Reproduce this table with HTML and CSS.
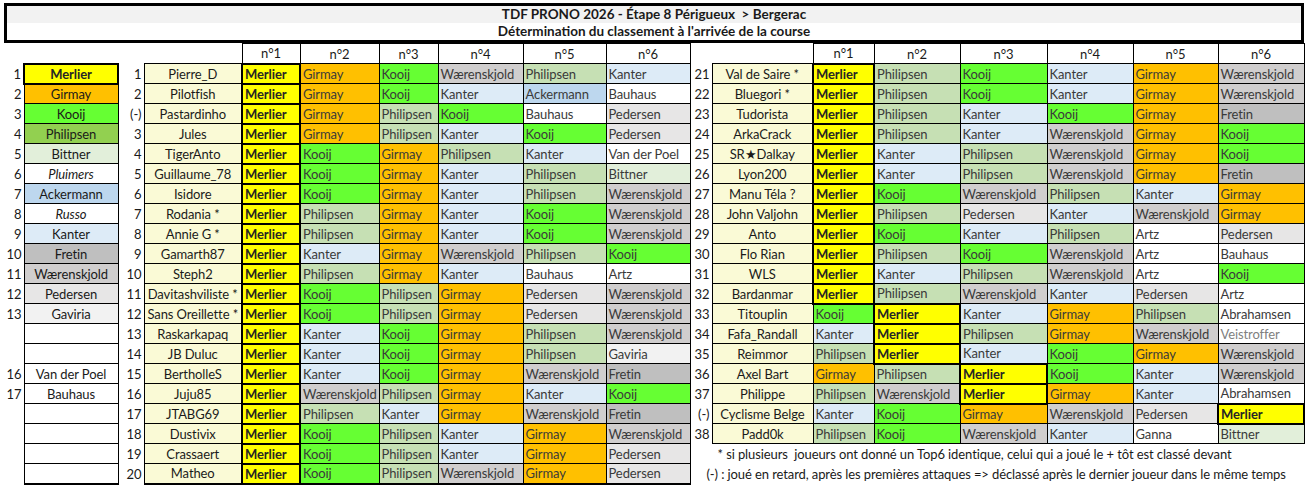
FILE: index.html
```html
<!DOCTYPE html>
<html lang="fr">
<head>
<meta charset="utf-8">
<title>TDF PRONO 2026 - Étape 8</title>
<link rel="stylesheet" href="styles.css">
</head>
<body>
<div class="sheet">
  <div class="title">
    <div class="l1">TDF PRONO 2026 - Étape 8 Périgueux &nbsp;&gt; Bergerac</div>
    <div class="l2">Détermination du classement à l'arrivée de la course</div>
  </div>
  <table class="grid">
    <colgroup>
      <col style="width:20px"><col style="width:94px"><col style="width:7px">
      <col style="width:19px"><col style="width:98px"><col style="width:58px"><col style="width:79px"><col style="width:59px"><col style="width:85px"><col style="width:83px"><col style="width:84px">
      <col style="width:22px"><col style="width:101px"><col style="width:61px"><col style="width:86px"><col style="width:87px"><col style="width:86px"><col style="width:85px"><col style="width:86px">
    </colgroup>
    <tr class="hd">
      <td class="nb" colspan="5"></td>
      <td class="h">n°1</td><td class="h">n°2</td><td class="h">n°3</td><td class="h">n°4</td><td class="h">n°5</td><td class="h">n°6</td>
      <td class="nb" colspan="2"></td>
      <td class="h">n°1</td><td class="h">n°2</td><td class="h">n°3</td><td class="h">n°4</td><td class="h">n°5</td><td class="h">n°6</td>
    </tr>
    <tr>
      <td class="rn">1</td><td class="rk me">Merlier</td><td class="nb"></td>
      <td class="rn">1</td><td class="nm">Pierre_D</td><td class="me">Merlier</td><td class="gi">Girmay</td><td class="ko">Kooij</td><td class="wa">Wærenskjold</td><td class="ph">Philipsen</td><td class="ka">Kanter</td>
      <td class="rn">21</td><td class="nm">Val de Saire *</td><td class="me">Merlier</td><td class="ph">Philipsen</td><td class="ko">Kooij</td><td class="ka">Kanter</td><td class="gi">Girmay</td><td class="wa">Wærenskjold</td>
    </tr>
    <tr>
      <td class="rn">2</td><td class="rk gi">Girmay</td><td class="nb"></td>
      <td class="rn">2</td><td class="nm">Pilotfish</td><td class="me">Merlier</td><td class="gi">Girmay</td><td class="ko">Kooij</td><td class="ka">Kanter</td><td class="ac">Ackermann</td><td class="wh">Bauhaus</td>
      <td class="rn">22</td><td class="nm">Bluegori *</td><td class="me">Merlier</td><td class="ph">Philipsen</td><td class="ko">Kooij</td><td class="ka">Kanter</td><td class="gi">Girmay</td><td class="wa">Wærenskjold</td>
    </tr>
    <tr>
      <td class="rn">3</td><td class="rk ko">Kooij</td><td class="nb"></td>
      <td class="rn">(-)</td><td class="nm">Pastardinho</td><td class="me">Merlier</td><td class="gi">Girmay</td><td class="ph">Philipsen</td><td class="ko">Kooij</td><td class="wh">Bauhaus</td><td class="pe">Pedersen</td>
      <td class="rn">23</td><td class="nm">Tudorista</td><td class="me">Merlier</td><td class="ph">Philipsen</td><td class="ka">Kanter</td><td class="ko">Kooij</td><td class="gi">Girmay</td><td class="fr">Fretin</td>
    </tr>
    <tr>
      <td class="rn">4</td><td class="rk ph2">Philipsen</td><td class="nb"></td>
      <td class="rn">3</td><td class="nm">Jules</td><td class="me">Merlier</td><td class="gi">Girmay</td><td class="ph">Philipsen</td><td class="ka">Kanter</td><td class="ko">Kooij</td><td class="pe">Pedersen</td>
      <td class="rn">24</td><td class="nm">ArkaCrack</td><td class="me">Merlier</td><td class="ph">Philipsen</td><td class="ka">Kanter</td><td class="wa">Wærenskjold</td><td class="gi">Girmay</td><td class="ko">Kooij</td>
    </tr>
    <tr>
      <td class="rn">5</td><td class="rk bi">Bittner</td><td class="nb"></td>
      <td class="rn">4</td><td class="nm">TigerAnto</td><td class="me">Merlier</td><td class="ko">Kooij</td><td class="gi">Girmay</td><td class="ph">Philipsen</td><td class="ka">Kanter</td><td class="wh">Van der Poel</td>
      <td class="rn">25</td><td class="nm">SR★Dalkay</td><td class="me">Merlier</td><td class="ka">Kanter</td><td class="ph">Philipsen</td><td class="wa">Wærenskjold</td><td class="gi">Girmay</td><td class="ko">Kooij</td>
    </tr>
    <tr>
      <td class="rn">6</td><td class="rk wh it">Pluimers</td><td class="nb"></td>
      <td class="rn">5</td><td class="nm">Guillaume_78</td><td class="me">Merlier</td><td class="ko">Kooij</td><td class="gi">Girmay</td><td class="ka">Kanter</td><td class="ph">Philipsen</td><td class="bi">Bittner</td>
      <td class="rn">26</td><td class="nm">Lyon200</td><td class="me">Merlier</td><td class="ka">Kanter</td><td class="ph">Philipsen</td><td class="wa">Wærenskjold</td><td class="gi">Girmay</td><td class="fr">Fretin</td>
    </tr>
    <tr>
      <td class="rn">7</td><td class="rk ac">Ackermann</td><td class="nb"></td>
      <td class="rn">6</td><td class="nm">Isidore</td><td class="me">Merlier</td><td class="ko">Kooij</td><td class="gi">Girmay</td><td class="ka">Kanter</td><td class="ph">Philipsen</td><td class="wa">Wærenskjold</td>
      <td class="rn">27</td><td class="nm">Manu Téla ?</td><td class="me">Merlier</td><td class="ko">Kooij</td><td class="wa">Wærenskjold</td><td class="ph">Philipsen</td><td class="ka">Kanter</td><td class="gi">Girmay</td>
    </tr>
    <tr>
      <td class="rn">8</td><td class="rk wh it">Russo</td><td class="nb"></td>
      <td class="rn">7</td><td class="nm">Rodania *</td><td class="me">Merlier</td><td class="ph">Philipsen</td><td class="gi">Girmay</td><td class="ka">Kanter</td><td class="ko">Kooij</td><td class="wa">Wærenskjold</td>
      <td class="rn">28</td><td class="nm">John Valjohn</td><td class="me">Merlier</td><td class="ph">Philipsen</td><td class="pe">Pedersen</td><td class="ka">Kanter</td><td class="wa">Wærenskjold</td><td class="gi">Girmay</td>
    </tr>
    <tr>
      <td class="rn">9</td><td class="rk ka">Kanter</td><td class="nb"></td>
      <td class="rn">8</td><td class="nm">Annie G *</td><td class="me">Merlier</td><td class="ph">Philipsen</td><td class="gi">Girmay</td><td class="ka">Kanter</td><td class="ko">Kooij</td><td class="wa">Wærenskjold</td>
      <td class="rn">29</td><td class="nm">Anto</td><td class="me">Merlier</td><td class="ko">Kooij</td><td class="ka">Kanter</td><td class="ph">Philipsen</td><td class="wh">Artz</td><td class="pe">Pedersen</td>
    </tr>
    <tr>
      <td class="rn">10</td><td class="rk fr">Fretin</td><td class="nb"></td>
      <td class="rn">9</td><td class="nm">Gamarth87</td><td class="me">Merlier</td><td class="ka">Kanter</td><td class="gi">Girmay</td><td class="wa">Wærenskjold</td><td class="ph">Philipsen</td><td class="ko">Kooij</td>
      <td class="rn">30</td><td class="nm">Flo Rian</td><td class="me">Merlier</td><td class="ph">Philipsen</td><td class="ko">Kooij</td><td class="wa">Wærenskjold</td><td class="wh">Artz</td><td class="wh">Bauhaus</td>
    </tr>
    <tr>
      <td class="rn">11</td><td class="rk wa">Wærenskjold</td><td class="nb"></td>
      <td class="rn">10</td><td class="nm">Steph2</td><td class="me">Merlier</td><td class="ph">Philipsen</td><td class="gi">Girmay</td><td class="ka">Kanter</td><td class="wh">Bauhaus</td><td class="wh">Artz</td>
      <td class="rn">31</td><td class="nm">WLS</td><td class="me">Merlier</td><td class="ka">Kanter</td><td class="ph">Philipsen</td><td class="wa">Wærenskjold</td><td class="wh">Artz</td><td class="ko">Kooij</td>
    </tr>
    <tr>
      <td class="rn">12</td><td class="rk pe">Pedersen</td><td class="nb"></td>
      <td class="rn">11</td><td class="nm">Davitashviliste *</td><td class="me">Merlier</td><td class="ko">Kooij</td><td class="ph">Philipsen</td><td class="gi">Girmay</td><td class="pe">Pedersen</td><td class="wa">Wærenskjold</td>
      <td class="rn">32</td><td class="nm">Bardanmar</td><td class="me">Merlier</td><td class="ph">Philipsen</td><td class="wa">Wærenskjold</td><td class="ka">Kanter</td><td class="pe">Pedersen</td><td class="wh">Artz</td>
    </tr>
    <tr>
      <td class="rn">13</td><td class="rk ga">Gaviria</td><td class="nb"></td>
      <td class="rn">12</td><td class="nm">Sans Oreillette *</td><td class="me">Merlier</td><td class="ko">Kooij</td><td class="ph">Philipsen</td><td class="gi">Girmay</td><td class="pe">Pedersen</td><td class="wa">Wærenskjold</td>
      <td class="rn">33</td><td class="nm">Titouplin</td><td class="ko">Kooij</td><td class="me">Merlier</td><td class="ka">Kanter</td><td class="gi">Girmay</td><td class="ph">Philipsen</td><td class="wh">Abrahamsen</td>
    </tr>
    <tr>
      <td class="rn"></td><td class="rk wh"></td><td class="nb"></td>
      <td class="rn">13</td><td class="nm">Raskarkapaq</td><td class="me">Merlier</td><td class="ka">Kanter</td><td class="ko">Kooij</td><td class="gi">Girmay</td><td class="ph">Philipsen</td><td class="wa">Wærenskjold</td>
      <td class="rn">34</td><td class="nm">Fafa_Randall</td><td class="ka">Kanter</td><td class="me">Merlier</td><td class="ph">Philipsen</td><td class="gi">Girmay</td><td class="wa">Wærenskjold</td><td class="wh ve">Veistroffer</td>
    </tr>
    <tr>
      <td class="rn"></td><td class="rk wh"></td><td class="nb"></td>
      <td class="rn">14</td><td class="nm">JB Duluc</td><td class="me">Merlier</td><td class="ka">Kanter</td><td class="ko">Kooij</td><td class="gi">Girmay</td><td class="ph">Philipsen</td><td class="ga">Gaviria</td>
      <td class="rn">35</td><td class="nm">Reimmor</td><td class="ph">Philipsen</td><td class="me">Merlier</td><td class="ka">Kanter</td><td class="ko">Kooij</td><td class="gi">Girmay</td><td class="wa">Wærenskjold</td>
    </tr>
    <tr>
      <td class="rn">16</td><td class="rk wh">Van der Poel</td><td class="nb"></td>
      <td class="rn">15</td><td class="nm">BertholleS</td><td class="me">Merlier</td><td class="ka">Kanter</td><td class="ko">Kooij</td><td class="gi">Girmay</td><td class="wa">Wærenskjold</td><td class="fr">Fretin</td>
      <td class="rn">36</td><td class="nm">Axel Bart</td><td class="gi">Girmay</td><td class="ph">Philipsen</td><td class="me">Merlier</td><td class="ko">Kooij</td><td class="ka">Kanter</td><td class="wa">Wærenskjold</td>
    </tr>
    <tr>
      <td class="rn">17</td><td class="rk wh">Bauhaus</td><td class="nb"></td>
      <td class="rn">16</td><td class="nm">Juju85</td><td class="me">Merlier</td><td class="wa">Wærenskjold</td><td class="ph">Philipsen</td><td class="gi">Girmay</td><td class="ka">Kanter</td><td class="ko">Kooij</td>
      <td class="rn">37</td><td class="nm">Philippe</td><td class="ph">Philipsen</td><td class="wa">Wærenskjold</td><td class="me">Merlier</td><td class="gi">Girmay</td><td class="ka">Kanter</td><td class="wh">Abrahamsen</td>
    </tr>
    <tr>
      <td class="rn"></td><td class="rk wh"></td><td class="nb"></td>
      <td class="rn">17</td><td class="nm">JTABG69</td><td class="me">Merlier</td><td class="ph">Philipsen</td><td class="ka">Kanter</td><td class="gi">Girmay</td><td class="wa">Wærenskjold</td><td class="fr">Fretin</td>
      <td class="rn">(-)</td><td class="nm">Cyclisme Belge</td><td class="ka">Kanter</td><td class="ko">Kooij</td><td class="gi">Girmay</td><td class="wa">Wærenskjold</td><td class="pe">Pedersen</td><td class="me">Merlier</td>
    </tr>
    <tr>
      <td class="rn"></td><td class="rk wh"></td><td class="nb"></td>
      <td class="rn">18</td><td class="nm">Dustivix</td><td class="me">Merlier</td><td class="ko">Kooij</td><td class="ph">Philipsen</td><td class="ka">Kanter</td><td class="gi">Girmay</td><td class="wa">Wærenskjold</td>
      <td class="rn">38</td><td class="nm">Padd0k</td><td class="ph">Philipsen</td><td class="ko">Kooij</td><td class="wa">Wærenskjold</td><td class="ka">Kanter</td><td class="wh">Ganna</td><td class="bi">Bittner</td>
    </tr>
    <tr>
      <td class="rn"></td><td class="rk wh"></td><td class="nb"></td>
      <td class="rn">19</td><td class="nm">Crassaert</td><td class="me">Merlier</td><td class="ko">Kooij</td><td class="ph">Philipsen</td><td class="ka">Kanter</td><td class="gi">Girmay</td><td class="pe">Pedersen</td>
      <td class="note n1" colspan="8">* si plusieurs &nbsp;joueurs ont donné un Top6 identique, celui qui a joué le + tôt est classé devant</td>
    </tr>
    <tr class="last">
      <td class="rn"></td><td class="rk wh"></td><td class="nb"></td>
      <td class="rn">20</td><td class="nm">Matheo</td><td class="me">Merlier</td><td class="ko">Kooij</td><td class="ph">Philipsen</td><td class="wa">Wærenskjold</td><td class="gi">Girmay</td><td class="pe">Pedersen</td>
      <td class="note n2" colspan="8">(-) : joué en retard, après les premières attaques =&gt; déclassé après le dernier joueur dans le même temps</td>
    </tr>
  </table>
</div>
</body>
</html>
```

FILE: styles.css
```css
body {
  margin: 0;
  background: #ffffff;
  font-family: Lato, "Liberation Sans", sans-serif;
  font-size: 13px;
  color: #1a1a1a;
}

.sheet {
  padding: 3px 0 0 4px;
  width: 1300px;
}

.title {
  border: 3px solid #000;
  font-weight: bold;
  font-size: 13.5px;
  text-align: center;
  color: #1a1a1a;
}

.title .l1 {
  background: #f2f2f2;
  height: 17px;
  line-height: 17px;
}

.title .l2 {
  height: 17px;
  line-height: 17px;
}

.grid {
  border-collapse: collapse;
  table-layout: fixed;
  width: 1300px;
  margin-top: 0;
  letter-spacing: -0.1px;
}

.grid tr {
  height: 20px;
}

.grid td {
  border: 1px solid #000;
  padding: 0 0 0 2px;
  line-height: 18px;
  white-space: nowrap;
  overflow: hidden;
  color: #3a3a3a;
  background: #ffffff;
}

.grid td.nb {
  border: none;
}

.grid td.h {
  text-align: center;
  color: #1a1a1a;
  padding: 0;
}

.grid td.rn {
  border: none;
  text-align: right;
  padding: 0 2px 0 0;
  color: #1a1a1a;
}

.grid td.rk {
  text-align: center;
  padding: 0;
  color: #1a1a1a;
}

.grid td.nm {
  background: #fafad6;
  text-align: center;
  padding: 0;
  color: #1a1a1a;
}

.grid td.it {
  font-style: italic;
}

.grid td.me {
  background: #ffff00;
  font-weight: bold;
  color: #262626;
  border: 2px solid #000;
}

.grid td.gi { background: #ffc000; }
.grid td.ko { background: #66ff33; }
.grid td.ph { background: #c6e0b4; }
.grid td.ph2 { background: #92d050; }
.grid td.bi { background: #e2efda; }
.grid td.ac { background: #bdd7ee; }
.grid td.ka { background: #ddebf7; }
.grid td.fr { background: #bfbfbf; }
.grid td.wa { background: #d0cece; }
.grid td.pe { background: #e7e6e6; }
.grid td.ga { background: #f2f2f2; }
.grid td.wh { background: #ffffff; }
.grid td.ve { color: #808080; }

.grid tr.last td {
  border-bottom-width: 2px;
}

.grid td.note {
  border: none;
  color: #1a1a1a;
  background: transparent;
}

.grid tr.last td.note,
.grid tr.last td.rn,
.grid tr.last td.nb {
  border: none;
}

.grid td.n1 {
  padding-left: 27px;
}

.grid td.n2 {
  padding-left: 16px;
}
```
